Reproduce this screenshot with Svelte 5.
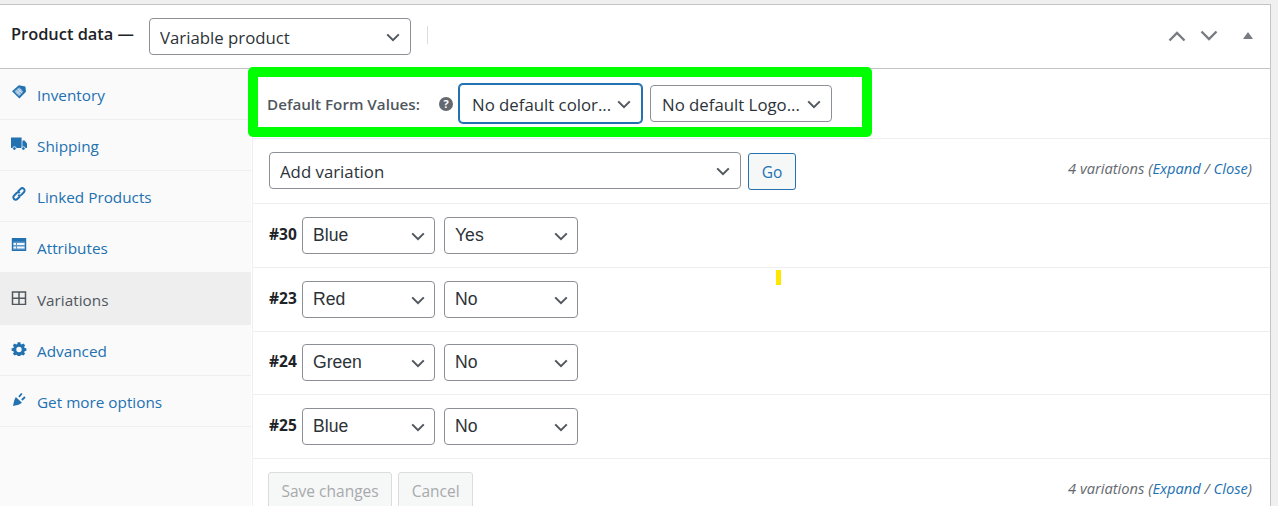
<script>
  const tabs = [
    { label: "Inventory", icon: "tag" },
    { label: "Shipping", icon: "truck" },
    { label: "Linked Products", icon: "link" },
    { label: "Attributes", icon: "card" },
    { label: "Variations", icon: "grid", active: true },
    { label: "Advanced", icon: "gear" },
    { label: "Get more options", icon: "plug" }
  ];

  const variations = [
    { id: 30, color: "Blue", logo: "Yes" },
    { id: 23, color: "Red", logo: "No" },
    { id: 24, color: "Green", logo: "No" },
    { id: 25, color: "Blue", logo: "No" }
  ];
</script>

{#snippet dropdown(value, cls)}
  <span class="select {cls}">
    <select tabindex="-1"><option>{value}</option></select>
    <svg class="chevron" viewBox="0 0 14 9" width="14" height="9" aria-hidden="true">
      <path d="M1.2 1.4 7 7.2l5.8-5.8" fill="none" stroke="currentColor" stroke-width="2" />
    </svg>
  </span>
{/snippet}

{#snippet tabIcon(name)}
  <svg class="tab__icon" viewBox="0 0 16 16" width="16" height="16" aria-hidden="true">
    {#if name === "tag"}
      <path d="M1 7.200 7.800 1.200l6.600 1.200.6 5.400-6.600 6.800z" fill="currentColor" />
      <path d="M3.400 7.400 8.200 3.200l4.200 4.400-4.400 4.600z" fill="#8fb8da" />
      <path d="M5 6.400l4.400 4.400M6.800 4.800l4.400 4.400M5.800 9.700l4.300-4.500" stroke="#e6eff7" stroke-width=".7" fill="none" />
    {:else if name === "truck"}
      <g transform="translate(0 1.500)">
        <path d="M0 1h10.600v10.400H0zM11.400 4h2.200l2.400 3v4.400h-4.600z" fill="currentColor" />
        <circle cx="3.400" cy="12" r="1.800" fill="currentColor" stroke="#fafafa" stroke-width=".8" />
        <circle cx="12.400" cy="12" r="1.800" fill="currentColor" stroke="#fafafa" stroke-width=".8" />
      </g>
    {:else if name === "link"}
      <g fill="none" stroke="currentColor" stroke-width="2">
        <path d="M6.800 5.800 9.600 2.900a2.300 2.300 0 0 1 3.300 3.300L10.300 8.900a2.300 2.300 0 0 1-3.200 0" />
        <path d="M9 10.200 6.300 13a2.300 2.300 0 0 1-3.300-3.300L5.600 7a2.300 2.300 0 0 1 3.200 0" />
      </g>
    {:else if name === "card"}
      <path d="M.8 1h14.400v13H.8z" fill="currentColor" />
      <path d="M2 4.500h12v8.300H2z" fill="#5b97c8" />
      <path d="M2.500 6h2.500v2H2.500zM2.500 9.500h2.500v2H2.500zM6 6h7.500v2H6zM6 9.500h7.500v2H6z" fill="#f2f6fa" />
    {:else if name === "grid"}
      <path d="M1.500 3h13v12.500h-13zM8 3v12.500M1.500 9.200h13" fill="none" stroke="currentColor" stroke-width="1.500" />
    {:else if name === "gear"}
      <path fill-rule="evenodd" d="M6.500 1h3l.4 2 1.200.5 1.700-1.100 2 2-1.100 1.700.5 1.200 2 .4v2.800l-2 .4-.5 1.200 1.100 1.700-2 2-1.700-1.100-1.200.5-.4 1.800h-3l-.4-1.800-1.200-.5-1.700 1.100-2-2 1.100-1.700-.5-1.200-2-.4V7.700l2-.4.500-1.200-1.100-1.700 2-2 1.700 1.100 1.200-.5zM8 6a3 3 0 1 0 0 6 3 3 0 0 0 0-6z" fill="currentColor" transform="translate(.8 1.400) scale(.9)" />
    {:else}
      <path d="M2 15 3.200 9.500l1.600-3.400 6.200 5.600-3.400 2z" fill="currentColor" />
      <path d="M8 5.800 10.800 2.500M10.800 9 14 6" stroke="currentColor" stroke-width="1.800" fill="none" />
    {/if}
  </svg>
{/snippet}

<div class="panel">
  <header class="head">
    <h2 class="head__title">Product data —</h2>
    {@render dropdown("Variable product", "select--type")}
    <span class="head__sep"></span>
    <span class="head__arrows">
      <svg viewBox="0 0 18 12" width="18" height="12" aria-hidden="true"><path d="M1.500 10.500 9 3l7.500 7.500" fill="none" stroke="#787c82" stroke-width="2.400" /></svg>
      <svg viewBox="0 0 18 12" width="18" height="12" aria-hidden="true"><path d="M1.500 1.500 9 9l7.500-7.500" fill="none" stroke="#787c82" stroke-width="2.400" /></svg>
      <svg class="head__toggle" viewBox="0 0 10 7" width="10" height="7" aria-hidden="true"><path d="M5 0l5 7H0z" fill="#787c82" /></svg>
    </span>
  </header>

  <div class="body">
    <ul class="tabs">
      {#each tabs as tab}
        <li class="tab" class:tab--active={tab.active}>
          {@render tabIcon(tab.icon)}
          <span class="tab__label">{tab.label}</span>
        </li>
      {/each}
    </ul>

    <div class="content">
      <div class="defaults">
        <strong class="defaults__label">Default Form Values:</strong>
        <span class="help">?</span>
        {@render dropdown("No default color...", "select--focus")}
        {@render dropdown("No default Logo...", "select--logo")}
      </div>

      <div class="toolbar">
        {@render dropdown("Add variation", "select--add")}
        <button class="btn btn--go" tabindex="-1">Go</button>
        <span class="count">4 variations (<a href="#top">Expand</a> / <a href="#top">Close</a>)</span>
      </div>

      {#each variations as row}
        <div class="row">
          <strong class="row__id">#{row.id}</strong>
          {@render dropdown(row.color, "select--attr")}
          {@render dropdown(row.logo, "select--attr select--attr2")}
        </div>
      {/each}

      <div class="foot">
        <button class="btn btn--off" tabindex="-1">Save changes</button>
        <button class="btn btn--off" tabindex="-1">Cancel</button>
        <span class="count">4 variations (<a href="#top">Expand</a> / <a href="#top">Close</a>)</span>
      </div>
    </div>
  </div>

  <div class="highlight"></div>
  <div class="mark"></div>
</div>

<style>
  :global(body) {
    margin: 0;
    background: #f0f0f1;
    overflow: hidden;
  }

  .panel {
    position: relative;
    box-sizing: border-box;
    width: 1271px;
    height: 502px;
    margin-top: 4px;
    overflow: hidden;
    background: #fff;
    border-top: 1px solid #c3c4c7;
    border-right: 1px solid #c3c4c7;
    font-family: "Open Sans", "Noto Sans", sans-serif;
    color: #2c3338;
  }

  .head {
    display: flex;
    align-items: center;
    box-sizing: border-box;
    height: 64px;
    padding: 0 0 0 11px;
    border-bottom: 1px solid #c3c4c7;
  }

  .head__title {
    width: 124px;
    margin: -6px 14px 0 0;
    font-size: 16.400px;
    font-weight: 600;
    white-space: nowrap;
    color: #1d2327;
  }

  .head__sep {
    width: 1px;
    height: 18px;
    margin: -4px 0 0 16px;
    background: #dcdcde;
  }

  .head__arrows {
    display: flex;
    align-items: center;
    gap: 14px;
    margin: -2px 0 0 auto;
    padding-right: 17px;
  }

  .head__toggle {
    margin-left: 11px;
  }

  .body {
    display: flex;
    height: 437px;
  }

  .tabs {
    flex: none;
    width: 251px;
    margin: 0;
    padding: 0;
    list-style: none;
    background: #fafafa;
  }

  .tab {
    display: flex;
    align-items: center;
    gap: 10px;
    box-sizing: border-box;
    height: 51px;
    padding: 0 0 0 11px;
    border-bottom: 1px solid #eee;
    font-size: 15.300px;
    color: #2271b1;
  }

  .tab--active {
    height: 52px;
    background: #eee;
    color: #50575e;
  }

  .tab__label {
    padding-top: 2px;
  }

  .tab__icon {
    flex: none;
    margin-top: -4px;
  }

  .content {
    flex: 1;
    margin-left: 1px;
    border-left: 1px solid #eee;
  }

  .defaults {
    display: flex;
    align-items: center;
    box-sizing: border-box;
    height: 70px;
    padding: 0 0 0 14px;
    border-bottom: 1px solid #eee;
  }

  .defaults__label {
    width: 152px;
    font-size: 15.200px;
    font-weight: 600;
    white-space: nowrap;
    color: #50575e;
  }

  .help {
    display: flex;
    align-items: center;
    justify-content: center;
    width: 14px;
    height: 14px;
    margin: 0 6px 0 20px;
    border-radius: 50%;
    background: #646970;
    color: #fff;
    font-size: 11px;
    font-weight: 700;
  }

  .toolbar {
    display: flex;
    align-items: center;
    box-sizing: border-box;
    height: 65px;
    padding: 0 18px 0 16px;
    border-bottom: 1px solid #eee;
  }

  .count {
    margin: -7px 0 0 auto;
    font-size: 14.700px;
    font-style: italic;
    white-space: nowrap;
    color: #646970;
  }

  .count a {
    color: #2271b1;
    text-decoration: none;
  }

  .row {
    display: flex;
    align-items: center;
    box-sizing: border-box;
    height: 64px;
    padding: 0 0 0 16px;
    border-bottom: 1px solid #eee;
  }

  .row:nth-child(5) {
    height: 63px;
    padding-bottom: 1px;
  }

  .row__id {
    width: 33px;
    margin-top: -3px;
    font-size: 15.500px;
    font-weight: 700;
    color: #1d2327;
  }

  .foot {
    display: flex;
    align-items: flex-start;
    gap: 6px;
    padding: 13px 18px 0 15px;
  }

  .foot .count {
    margin-top: 6px;
  }

  .btn {
    box-sizing: border-box;
    height: 38px;
    padding: 0 12.500px;
    border: 1px solid #2271b1;
    border-radius: 3px;
    background: #f6f7f7;
    color: #2271b1;
    font-family: inherit;
    font-size: 15.500px;
  }

  .btn--go {
    width: 48px;
    height: 37px;
    margin: 1px 0 0 7px;
    padding: 1px 0 0;
  }

  .btn--off {
    border-color: #dcdcde;
    color: #a7aaad;
  }

  .select {
    position: relative;
    display: inline-flex;
    box-sizing: border-box;
    color: #50575e;
  }

  .select select {
    appearance: none;
    box-sizing: border-box;
    width: 100%;
    height: 37px;
    margin: 0;
    padding: 2px 24px 0 10px;
    border: 1px solid #8c8f94;
    border-radius: 4px;
    background: #fff;
    color: #2c3338;
    font-family: inherit;
    font-size: 16.800px;
    outline: none;
  }

  .chevron {
    position: absolute;
    top: 15px;
    right: 11px;
    pointer-events: none;
  }

  .select--type {
    width: 262px;
  }

  .select--focus {
    width: 183px;
  }

  .select--focus select {
    height: 39px;
    padding-left: 12px;
    border-color: #2271b1;
    box-shadow: 0 0 0 1px #2271b1;
  }

  .select--focus .chevron {
    top: 16px;
  }

  .select--logo {
    width: 182px;
    margin-left: 8px;
  }

  .select--logo select {
    padding-left: 11px;
  }

  .select--add {
    width: 472px;
    margin-top: -1px;
  }

  .select--attr {
    width: 133px;
  }

  .select--attr select {
    padding-top: 0;
    padding-bottom: 2px;
    font-family: "Liberation Sans", Arial, sans-serif;
    font-size: 17.600px;
  }

  .select--attr .chevron {
    right: 10px;
  }

  .select--attr2 {
    width: 134px;
    margin-left: 9px;
  }

  .highlight {
    position: absolute;
    top: 62px;
    left: 248px;
    box-sizing: border-box;
    width: 624px;
    height: 70px;
    border: 10px solid #00ff00;
    border-radius: 5px;
    pointer-events: none;
  }

  .mark {
    position: absolute;
    top: 265px;
    left: 776px;
    width: 5px;
    height: 15px;
    background: #ffe600;
  }
</style>
